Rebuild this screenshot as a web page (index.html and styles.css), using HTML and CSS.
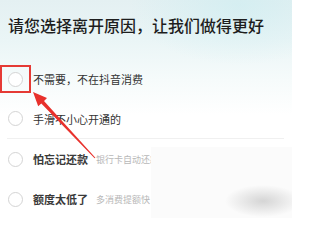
FILE: index.html
```html
<!DOCTYPE html>
<html lang="zh-CN">
<head>
<meta charset="utf-8">
<link rel="stylesheet" href="styles.css">
</head>
<body>
<div class="page">
  <h1 class="title">请您选择离开原因，让我们做得更好</h1>
  <ul class="reasons">
    <li class="reason"><span class="radio"></span><span class="label">不需要，不在抖音消费</span></li>
    <li class="reason divided"><span class="radio"></span><span class="label">手滑不小心开通的</span></li>
    <li class="reason"><span class="radio"></span><span class="label strong">怕忘记还款</span><span class="hint">银行卡自动还款</span></li>
    <li class="reason"><span class="radio"></span><span class="label strong">额度太低了</span><span class="hint">多消费提额快</span></li>
  </ul>
  <div class="patch"></div>
  <div class="mark"></div>
  <svg class="arrow" width="292" height="218" viewBox="0 0 292 218">
    <polygon fill="#e8312c" points="33,92 47,98 44,100.9 95.4,157.7 94.6,158.3 41.3,103.4 38.2,106.3"/>
  </svg>
</div>
</body>
</html>
```
FILE: styles.css
```css
* { box-sizing: border-box; }
html, body { margin: 0; padding: 0; }
body {
  width: 292px;
  height: 218px;
  overflow: hidden;
  font-family: "Noto Sans CJK SC", "Noto Sans", sans-serif;
  background: #fff;
}
.page {
  position: relative;
  width: 292px;
  height: 218px;
  padding: 15px 8px 0 7px;
  background:
    radial-gradient(ellipse 110px 60px at 240px 5px, rgba(200, 236, 240, 0.55), rgba(200, 236, 240, 0) 100%),
    linear-gradient(to bottom, #e4f0f2 0px, #eaf5f6 40px, #f6fbfb 80px, #ffffff 115px);
}
.title {
  margin: 0 0 0 1px;
  font-size: 16px;
  line-height: 20px;
  font-weight: 500;
  color: #1e1e1e;
  white-space: nowrap;
}
.reasons {
  list-style: none;
  margin: 24px 0 0 0;
  padding: 0;
}
.reason {
  display: flex;
  align-items: center;
  height: 40px;
  white-space: nowrap;
}
.reason.divided {
  border-bottom: 1px solid #f0f0f0;
}
.radio {
  flex: none;
  width: 15px;
  height: 15px;
  border: 1px solid #d4d4d4;
  border-radius: 50%;
  background: #fff;
  margin-left: 1px;
  margin-right: 10px;
}
.label {
  font-size: 11px;
  color: #333;
}
.label.strong {
  font-weight: 700;
  color: #3a3a3a;
}
.hint {
  margin-left: 8px;
  font-size: 9px;
  color: #b8b8b8;
}
.patch {
  position: absolute;
  left: 151px;
  top: 147px;
  width: 141px;
  height: 71px;
  background:
    radial-gradient(ellipse 38px 16px at 112px 54px, rgba(200, 200, 200, 0.75), rgba(220, 220, 220, 0) 100%),
    #fbfbfb;
}
.mark {
  position: absolute;
  left: 0;
  top: 65px;
  width: 31px;
  height: 28px;
  border: 2px solid #e53a35;
}
.arrow {
  position: absolute;
  left: 0;
  top: 0;
}
```
